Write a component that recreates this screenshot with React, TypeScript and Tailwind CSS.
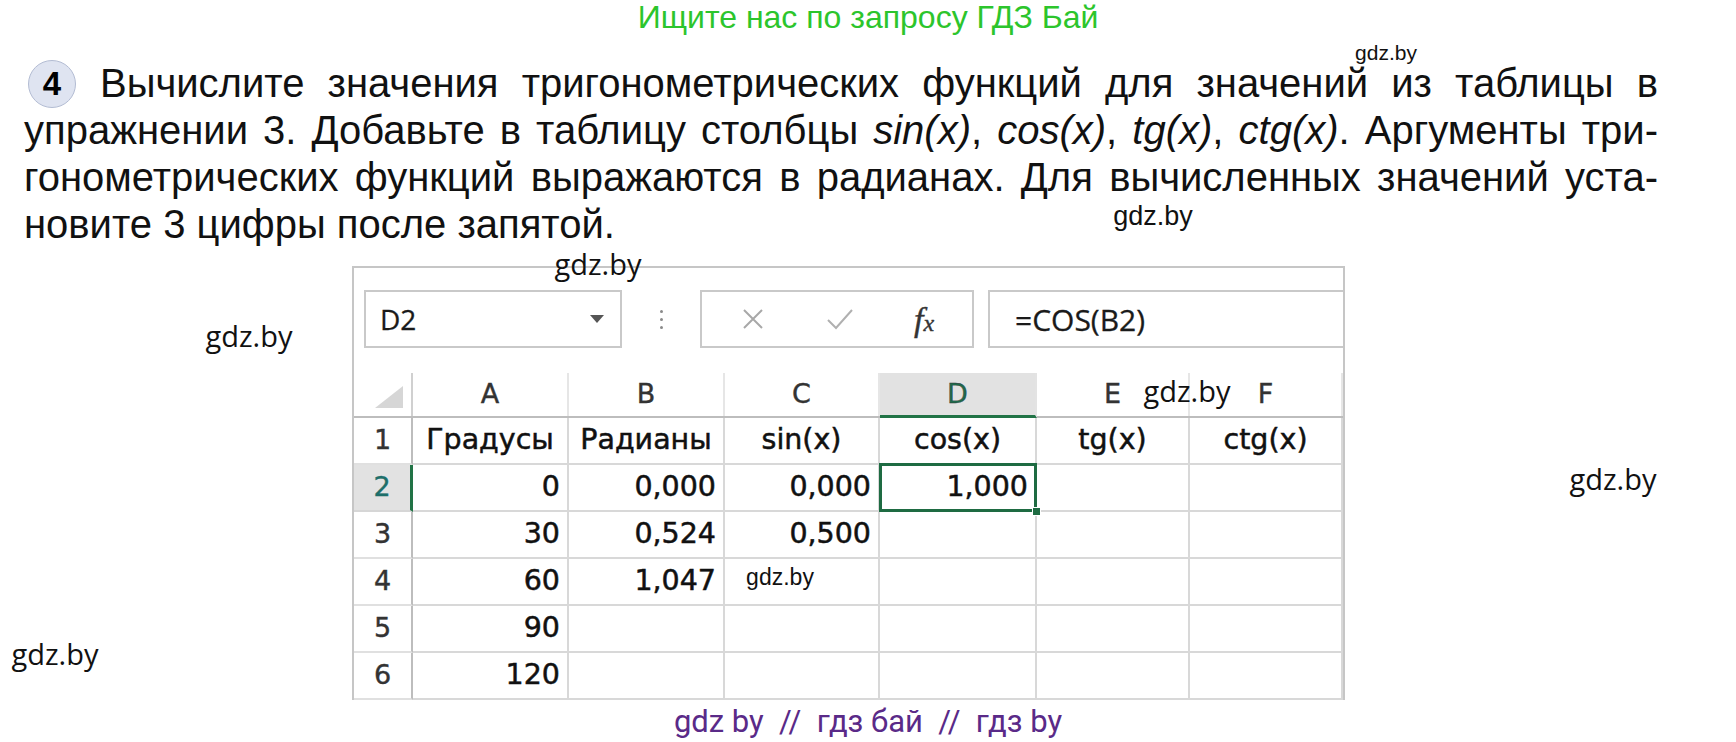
import React from "react";

const GRID = "border-[#d8d8d8]";

type Col = { w: string; letter: string };
const COLS: Col[] = [
  { w: "w-[156px]", letter: "A" },
  { w: "w-[156px]", letter: "B" },
  { w: "w-[155px]", letter: "C" },
  { w: "w-[157px]", letter: "D" },
  { w: "w-[153px]", letter: "E" },
  { w: "w-[153px]", letter: "F" },
];

const ROWS: string[][] = [
  ["Градусы", "Радианы", "sin(x)", "cos(x)", "tg(x)", "ctg(x)"],
  ["0", "0,000", "0,000", "1,000", "", ""],
  ["30", "0,524", "0,500", "", "", ""],
  ["60", "1,047", "", "", "", ""],
  ["90", "", "", "", "", ""],
  ["120", "", "", "", "", ""],
];

function Watermark({ className, children }: { className: string; children: React.ReactNode }) {
  return (
    <div className={`absolute z-20 -translate-x-1/2 -translate-y-1/2 whitespace-nowrap leading-none text-[#111] ${className}`}>
      {children}
    </div>
  );
}

function FormulaBar() {
  return (
    <div className="flex h-[58px] items-stretch pl-[10px] mt-[22px] font-['Open_Sans',sans-serif]">
      {/* name box */}
      <div className="flex w-[258px] items-center justify-between border-2 border-[#c9c9c9] pl-[14px] pr-[16px]">
        <span className="text-[28px] text-[#1a1a1a] [-webkit-text-stroke:0.3px_#1a1a1a]">D2</span>
        <svg width="14" height="8" viewBox="0 0 14 8">
          <path d="M0 0 L14 0 L7 8 Z" fill="#555" />
        </svg>
      </div>
      {/* dots */}
      <div className="flex w-[78px] flex-col items-center justify-center gap-[5px]">
        <span className="h-[3px] w-[3px] rounded-full bg-[#8a8a8a]" />
        <span className="h-[3px] w-[3px] rounded-full bg-[#8a8a8a]" />
        <span className="h-[3px] w-[3px] rounded-full bg-[#8a8a8a]" />
      </div>
      {/* buttons */}
      <div className="flex w-[274px] items-center border-2 border-[#c9c9c9]">
        <div className="flex w-[96px] justify-center pl-[6px]">
          <svg width="24" height="24" viewBox="0 0 24 24">
            <path d="M3 3 L21 21 M21 3 L3 21" stroke="#a8a8a8" strokeWidth="2" fill="none" />
          </svg>
        </div>
        <div className="flex w-[84px] justify-center">
          <svg width="28" height="24" viewBox="0 0 28 24">
            <path d="M2 13 L10 21 L26 3" stroke="#b0b0b0" strokeWidth="2" fill="none" />
          </svg>
        </div>
        <div className="flex flex-1 items-baseline justify-center pr-[6px] font-['Liberation_Serif',serif] italic text-[#333] [-webkit-text-stroke:0.4px_#333]">
          <span className="text-[34px]">f</span>
          <span className="text-[24px]">x</span>
        </div>
      </div>
      {/* formula */}
      <div className="ml-[14px] flex flex-1 items-center border-y-2 border-l-2 border-[#c9c9c9] pl-[25px]">
        <span className="text-[30px] text-[#1a1a1a] [-webkit-text-stroke:0.3px_#1a1a1a]">=COS(B2)</span>
      </div>
    </div>
  );
}

function Sheet() {
  return (
    <div className="ml-[352px] mt-[18px] w-[993px] border-x-2 border-t-2 border-[#c6c6c6] bg-white">
      <FormulaBar />
      {/* column header row */}
      <div className="mt-[25px] flex h-[45px] border-b-2 border-[#bdbdbd] font-['DejaVu_Sans',sans-serif] text-[27px] text-[#333] [-webkit-text-stroke:0.4px_#333]">
        <div className="flex w-[59px] items-end justify-end border-r-2 border-[#d0d0d0] pb-[8px] pr-[8px]">
          <svg width="28" height="22" viewBox="0 0 28 22">
            <path d="M28 0 L28 22 L0 22 Z" fill="#d6d6d6" />
          </svg>
        </div>
        {COLS.map((c) =>
          c.letter === "D" ? (
            <div
              key={c.letter}
              className={`${c.w} -mb-[2px] flex items-center justify-center border-b-[3px] border-r-2 border-b-[#217346] border-r-[#e3e3e3] bg-[#e2e2e2] text-[#1f6a4c]`}
            >
              {c.letter}
            </div>
          ) : (
            <div key={c.letter} className={`${c.w} flex items-center justify-center border-r-2 border-[#e6e6e6]`}>
              {c.letter}
            </div>
          )
        )}
      </div>
      {/* data rows */}
      {ROWS.map((row, ri) => {
        const selRow = ri === 1;
        return (
          <div key={ri} className="flex h-[47px] font-['DejaVu_Sans',sans-serif] text-[28.5px] text-[#111] [-webkit-text-stroke:0.5px_#111]">
            <div
              className={
                selRow
                  ? "flex w-[59px] items-center justify-center border-b-2 border-r-[3px] border-b-[#d6d6d6] border-r-[#217346] bg-[#e2e2e2] text-[27px] text-[#1e6f6a] [-webkit-text-stroke:0.4px_#1e6f6a]"
                  : "flex w-[59px] items-center justify-center border-b-2 border-r-2 border-b-[#e0e0e0] border-r-[#bdbdbd] text-[27px] text-[#333] [-webkit-text-stroke:0.4px_#333]"
              }
            >
              {ri + 1}
            </div>
            {row.map((v, ci) => {
              const header = ri === 0;
              const sel = ri === 1 && ci === 3;
              return (
                <div
                  key={ci}
                  className={`${COLS[ci].w} relative flex items-center border-b-2 border-r-2 ${GRID} ${
                    header ? "justify-center" : "justify-end pr-[7px]"
                  }`}
                >
                  {v}
                  {sel && (
                    <>
                      <div className="absolute -left-[1px] -top-[2px] -right-[2px] -bottom-[2px] z-10 border-[3px] border-[#1e6b42]" />
                      <div className="absolute -right-[6px] -bottom-[6px] z-10 h-[9px] w-[9px] border border-white bg-[#1e6b42]" />
                    </>
                  )}
                </div>
              );
            })}
          </div>
        );
      })}
    </div>
  );
}

export default function App() {
  return (
    <div className="relative h-[742px] w-[1736px] overflow-hidden bg-white font-['Liberation_Sans',sans-serif] text-[#111]">
      <div className="text-center text-[32px] leading-[34px] text-[#2cc52c]">Ищите нас по запросу ГДЗ Бай</div>

      <div className="ml-[24px] mt-[26px] w-[1634px] text-[40px] leading-[47px]">
        <div className="flex h-[47px] items-center">
          <div className="ml-[4px] flex h-[48px] w-[48px] shrink-0 items-center justify-center rounded-full border-[1.5px] border-[#b3bcd3] bg-[#dfe4f1] text-[33px] font-bold text-black">
            4
          </div>
          <div className="ml-[24px] flex-1 text-justify [text-align-last:justify]">
            Вычислите значения тригонометрических функций для значений из таблицы в
          </div>
        </div>
        <div className="h-[47px] text-justify [text-align-last:justify]">
          упражнении 3. Добавьте в таблицу столбцы <i>sin(x)</i>, <i>cos(x)</i>, <i>tg(x)</i>, <i>ctg(x)</i>. Аргументы три-
        </div>
        <div className="h-[47px] text-justify [text-align-last:justify]">
          гонометрических функций выражаются в радианах. Для вычисленных значений уста-
        </div>
        <div className="h-[47px]">новите 3 цифры после запятой.</div>
      </div>

      <Sheet />

      <div className="mt-[2px] h-[40px] whitespace-pre text-center font-['Roboto',sans-serif] text-[31px] leading-[40px] text-[#5a2a88]">
        {"gdz by  //  гдз бай  //  гдз by"}
      </div>

      {/* watermarks */}
      <Watermark className="left-[1386px] top-[52px] text-[21px]">gdz.by</Watermark>
      <Watermark className="left-[1153px] top-[216px] text-[27px]">gdz.by</Watermark>
      <Watermark className="left-[780px] top-[577px] text-[23px]">gdz.by</Watermark>
      <Watermark className="left-[598px] top-[263px] font-['Open_Sans',sans-serif] text-[29px]">gdz.by</Watermark>
      <Watermark className="left-[249px] top-[335px] font-['Open_Sans',sans-serif] text-[29px]">gdz.by</Watermark>
      <Watermark className="left-[1187px] top-[390px] font-['Open_Sans',sans-serif] text-[29px]">gdz.by</Watermark>
      <Watermark className="left-[1613px] top-[478px] font-['Open_Sans',sans-serif] text-[29px]">gdz.by</Watermark>
      <Watermark className="left-[55px] top-[653px] font-['Open_Sans',sans-serif] text-[29px]">gdz.by</Watermark>
    </div>
  );
}
